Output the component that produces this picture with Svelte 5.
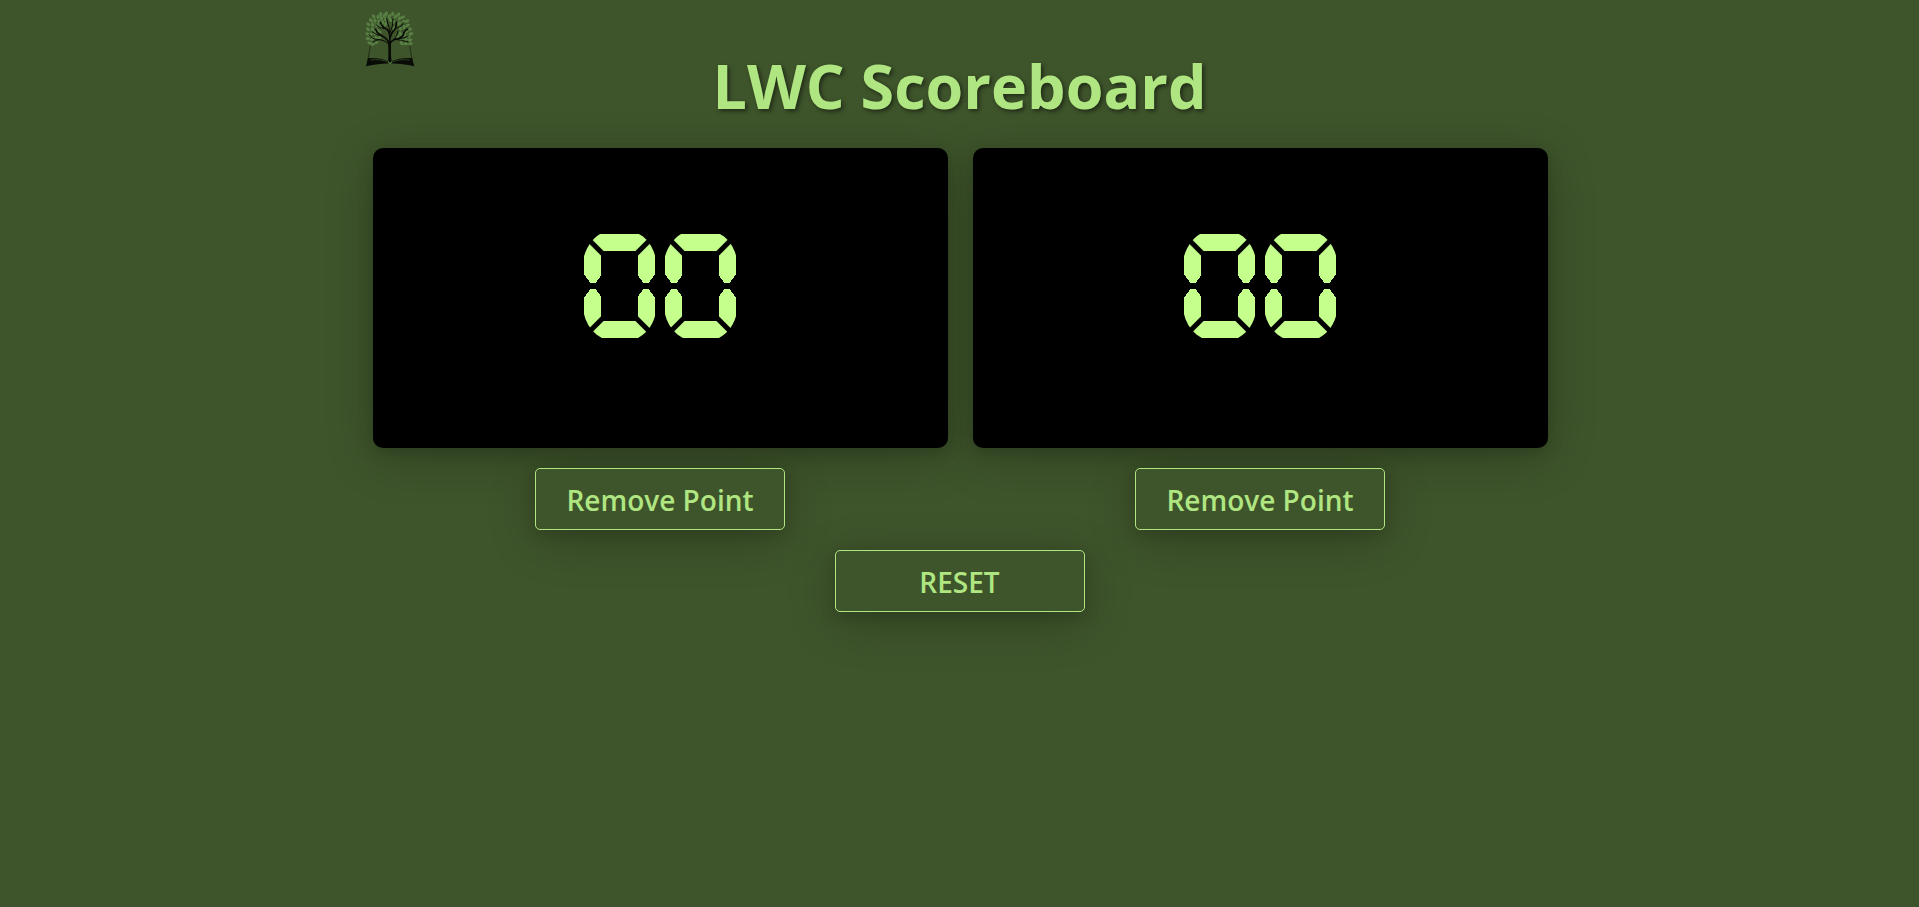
<script>
  let scores = $state([0, 0]);

  const digits = (score) => String(score).padStart(2, '0').split('');

  function add(team) {
    scores[team] = Math.min(99, scores[team] + 1);
  }

  function remove(team) {
    scores[team] = Math.max(0, scores[team] - 1);
  }

  function reset() {
    scores = [0, 0];
  }

  // Leaf positions in the crown of the logo: x, y, rotation
  const leaves = [
    [44, 129, -70], [54, 132, 50], [65, 126, 20], [39, 116, -75], [52, 117, 40], [64, 114, -30],
    [38, 102, -70], [48, 104, 30], [59, 101, -40], [39, 88, -50], [52, 88, -10], [64, 91, 50],
    [40, 73, -50], [53, 74, -20], [66, 76, 35], [48, 61, -45], [60, 63, 0], [72, 65, 30],
    [56, 50, -30], [69, 51, 10], [79, 55, -30], [77, 43, -15], [88, 47, 20], [92, 58, 5],
    [94, 41, 0], [103, 49, 30], [106, 60, -25], [113, 42, 20], [121, 50, 35], [130, 44, 35],
    [116, 66, 20], [133, 56, 30], [143, 52, 55], [145, 66, 50], [132, 71, 40], [156, 63, 60],
    [158, 76, 65], [147, 82, 20], [136, 85, -10], [164, 88, 75], [154, 94, 80], [168, 101, 85],
    [160, 109, 75], [148, 104, 20], [136, 101, -20], [151, 119, 80], [165, 120, 80], [139, 119, 20],
    [128, 110, 30], [152, 131, 85], [166, 131, 80], [140, 130, -40], [78, 79, -20], [83, 68, 10],
    [91, 73, 20], [118, 84, 30], [74, 96, -45], [73, 114, 20]
  ];
</script>

<main>
  <header>
    <svg class="logo" viewBox="30 30 150 171" aria-hidden="true">
      <g fill="#587f43">
        {#each leaves as [x, y, turn]}
          <path d="M0-8Q10-1 0 8Q-10-1 0-8Z" transform="translate({x} {y}) rotate({turn})" />
        {/each}
      </g>
      <g fill="none" stroke="#080b06" stroke-linecap="round" stroke-linejoin="round">
        <path d="M104 180V136" stroke-width="8" />
        <path d="M104 140Q103 119 82 108Q66 100 62 88M104 140Q105 112 104 104Q101 88 88 84Q79 77 76 67" stroke-width="5" />
        <path d="M104 138Q104 125 119 118Q138 116 145 105Q147 92 158 88M105 115Q108 99 117 91Q124 84 124 67" stroke-width="5" />
        <path d="M103 135Q91 119 66 118Q51 118 43 104M82 108Q63 106 52 96M103 101Q105 82 98 69L95 55M104 101Q116 76 114 57M120 87L139 78L145 68M117 118Q128 109 129 94M120 118Q144 120 159 126M73 119Q61 120 54 127M90 86Q73 86 64 75M133 116Q149 116 160 108" stroke-width="3" />
        <path d="M46 138L38 184M164 138L172 184" stroke-width="1.5" />
      </g>
      <path fill="#080b06" d="M33 199L39 174Q78 173 100 184L103 158H107L110 184Q132 173 171 174L178 199Q132 189 106 191Q80 189 33 199Z" />
      <path fill="none" stroke="#3e542b" stroke-width="2" d="M46 180Q80 176 100 187M164 180Q132 176 110 187" />
      <path fill="#587f43" d="M99 182L105 189L111 182L110 190L105 193L100 190Z" />
    </svg>
    <h1>LWC Scoreboard</h1>
  </header>

  <section class="teams">
    {#each scores as score, team}
      <div class="team">
        <button class="board" type="button" onclick={() => add(team)}>
          {#each digits(score) as digit}<span class="digit" class:zero={digit === '0'}>{digit}</span>{/each}
        </button>
        <button class="action" type="button" onclick={() => remove(team)}>Remove Point</button>
      </div>
    {/each}
  </section>

  <button class="action" type="button" onclick={reset}>RESET</button>
</main>

<style>
  :global(body) {
    margin: 0;
    min-height: 100vh;
    background: #3e542b;
    font-family: 'Open Sans', 'Noto Sans', sans-serif;
  }

  main {
    display: flex;
    flex-direction: column;
    align-items: center;
    gap: 20px;
    max-width: 1200px;
    margin: 0 auto;
  }

  header {
    display: grid;
    width: 100%;
    height: 128px;
  }

  .logo {
    grid-area: 1 / 1;
    width: 50px;
    height: 57px;
    margin: 10px 0 0 5px;
  }

  h1 {
    grid-area: 1 / 1;
    justify-self: center;
    margin: 41px 0 0;
    color: #b0e681;
    font-size: 61px;
    font-weight: 700;
    line-height: 90px;
    text-shadow: 2px 2px 4px rgba(0, 0, 0, 0.5);
  }

  .teams {
    display: grid;
    grid-template-columns: 1fr 1fr;
    gap: 25px;
    box-sizing: border-box;
    width: 100%;
    padding: 0 12px 0 13px;
  }

  .team {
    display: flex;
    flex-direction: column;
    align-items: center;
    gap: 20px;
  }

  button {
    font-family: inherit;
    cursor: pointer;
    box-shadow: 0 4px 16px rgba(0, 0, 0, 0.15), 0 10px 50px rgba(0, 0, 0, 0.2);
  }

  .board {
    display: flex;
    align-items: center;
    justify-content: center;
    width: 100%;
    height: 300px;
    padding: 0 0 24px;
    border: 0;
    border-radius: 10px;
    background: #000;
    color: #c5ff8c;
  }

  /* Dark notches laid over each numeral split its strokes into segments */
  .digit {
    position: relative;
    width: 81px;
    height: 104px;
    clip-path: inset(0 5px);
    font-family: Roboto, 'Liberation Sans', sans-serif;
    font-size: 142px;
    font-weight: 700;
    line-height: 110px;
    text-align: center;
    -webkit-text-stroke: 8px #c5ff8c;
  }

  .digit::after {
    content: '';
    position: absolute;
    inset: 0;
    --down: linear-gradient(45deg, transparent calc(50% - 3px), #000 calc(50% - 2px) calc(50% + 2px), transparent calc(50% + 3px));
    --up: linear-gradient(-45deg, transparent calc(50% - 3px), #000 calc(50% - 2px) calc(50% + 2px), transparent calc(50% + 3px));
    --notch: conic-gradient(from 38deg, #000 104deg, transparent 0 180deg, #000 0 284deg, transparent 0);
    --core: linear-gradient(transparent, transparent);
    background:
      var(--core) center / 37px 70px,
      var(--down) left 4px top 0 / 24px 24px,
      var(--up) right 4px top 0 / 24px 24px,
      var(--up) left 4px bottom 0 / 24px 24px,
      var(--down) right 4px bottom 0 / 24px 24px,
      var(--notch) left 4px center / 20px 26px,
      var(--notch) right 4px center / 20px 26px,
      linear-gradient(#000, #000) center / 100% 6px;
    background-repeat: no-repeat;
  }

  .zero::after {
    --core: linear-gradient(#000, #000);
  }

  .action {
    width: 250px;
    height: 62px;
    padding: 2px 0 0;
    border: 1px solid #b0e681;
    border-radius: 5px;
    background: #3e542b;
    color: #b0e681;
    font-size: 28px;
    font-weight: 600;
  }
</style>
